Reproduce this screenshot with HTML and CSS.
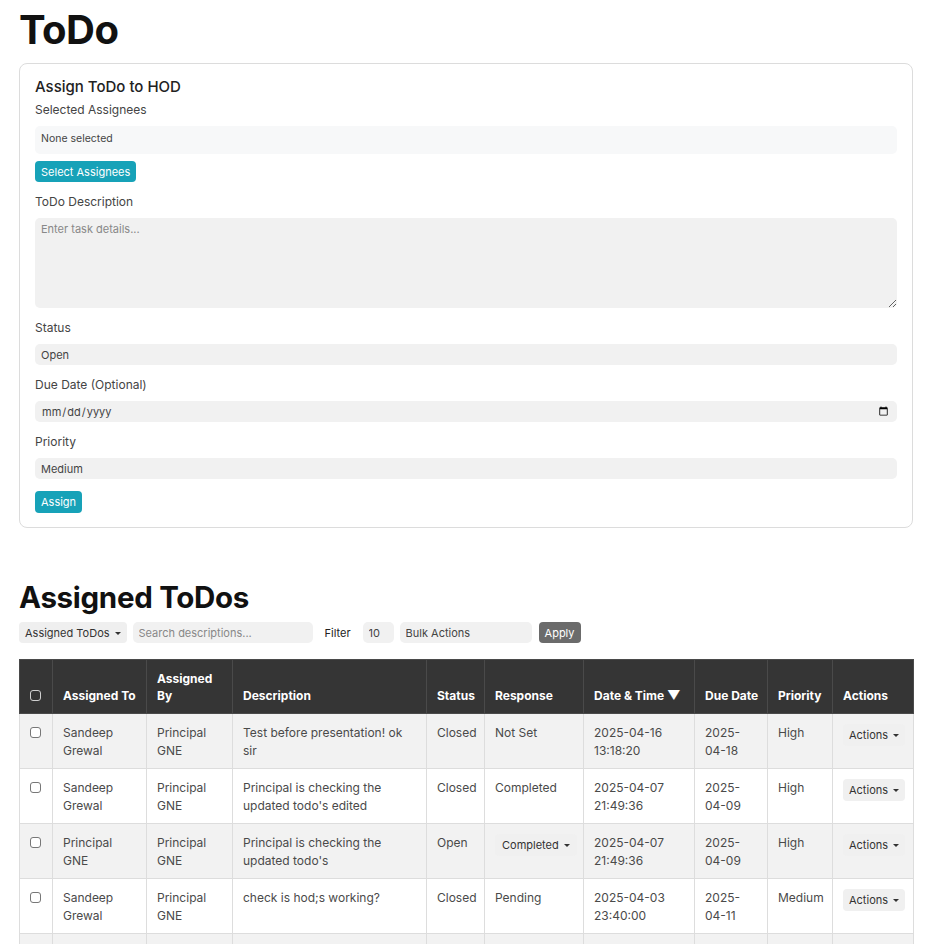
FILE: index.html
```html
<!DOCTYPE html>
<html lang="en">
<head>
<meta charset="utf-8">
<title>ToDo</title>
<link rel="stylesheet" href="styles.css">
</head>
<body>
<div class="page">
  <h1 class="page-title">ToDo</h1>

  <section class="card">
    <h3 class="card-title">Assign ToDo to HOD</h3>

    <label class="form-label">Selected Assignees</label>
    <div class="assignee-box">None selected</div>
    <button class="btn btn-info btn-select">Select Assignees</button>

    <label class="form-label">ToDo Description</label>
    <textarea class="form-control textarea" placeholder="Enter task details..."></textarea>

    <label class="form-label">Status</label>
    <select class="form-control select"><option>Open</option></select>

    <label class="form-label">Due Date (Optional)</label>
    <input class="form-control date" type="date">

    <label class="form-label">Priority</label>
    <select class="form-control select"><option>Medium</option></select>

    <button class="btn btn-info btn-assign">Assign</button>
  </section>

  <h2 class="section-title">Assigned ToDos</h2>

  <div class="toolbar">
    <button class="btn btn-light dropdown-toggle">Assigned ToDos</button>
    <input class="tool-input search" type="text" placeholder="Search descriptions...">
    <span class="filter-label">Filter</span>
    <select class="tool-input count"><option>10</option></select>
    <select class="tool-input bulk"><option>Bulk Actions</option></select>
    <button class="btn btn-secondary">Apply</button>
  </div>

  <table class="todo-table">
    <colgroup>
      <col style="width:33px"><col style="width:94px"><col style="width:86px"><col style="width:194px"><col style="width:58px"><col style="width:99px"><col style="width:111px"><col style="width:73px"><col style="width:65px"><col style="width:81px">
    </colgroup>
    <thead>
      <tr>
        <th><input type="checkbox" class="cb cb-head"></th>
        <th>Assigned To</th>
        <th class="wrap">Assigned By</th>
        <th>Description</th>
        <th>Status</th>
        <th>Response</th>
        <th>Date &amp; Time <span class="sort">▼</span></th>
        <th>Due Date</th>
        <th>Priority</th>
        <th>Actions</th>
      </tr>
    </thead>
    <tbody>
      <tr>
        <td><input type="checkbox" class="cb"></td>
        <td>Sandeep Grewal</td>
        <td>Principal GNE</td>
        <td>Test before presentation! ok sir</td>
        <td>Closed</td>
        <td>Not Set</td>
        <td>2025-04-16 13:18:20</td>
        <td>2025-04-18</td>
        <td>High</td>
        <td><button class="btn btn-row dropdown-toggle">Actions</button></td>
      </tr>
      <tr>
        <td><input type="checkbox" class="cb"></td>
        <td>Sandeep Grewal</td>
        <td>Principal GNE</td>
        <td>Principal is checking the updated todo's edited</td>
        <td>Closed</td>
        <td>Completed</td>
        <td>2025-04-07 21:49:36</td>
        <td>2025-04-09</td>
        <td>High</td>
        <td><button class="btn btn-row dropdown-toggle">Actions</button></td>
      </tr>
      <tr>
        <td><input type="checkbox" class="cb"></td>
        <td>Principal GNE</td>
        <td>Principal GNE</td>
        <td>Principal is checking the updated todo's</td>
        <td>Open</td>
        <td><button class="btn btn-row btn-response dropdown-toggle">Completed</button></td>
        <td>2025-04-07 21:49:36</td>
        <td>2025-04-09</td>
        <td>High</td>
        <td><button class="btn btn-row dropdown-toggle">Actions</button></td>
      </tr>
      <tr>
        <td><input type="checkbox" class="cb"></td>
        <td>Sandeep Grewal</td>
        <td>Principal GNE</td>
        <td>check is hod;s working?</td>
        <td>Closed</td>
        <td>Pending</td>
        <td>2025-04-03 23:40:00</td>
        <td>2025-04-11</td>
        <td>Medium</td>
        <td><button class="btn btn-row dropdown-toggle">Actions</button></td>
      </tr>
      <tr>
        <td><input type="checkbox" class="cb"></td>
        <td>Sandeep Grewal</td>
        <td>Principal GNE</td>
        <td>Review the timetable</td>
        <td>Open</td>
        <td>Pending</td>
        <td>2025-04-01 10:12:45</td>
        <td>2025-04-05</td>
        <td>Low</td>
        <td><button class="btn btn-row dropdown-toggle">Actions</button></td>
      </tr>
    </tbody>
  </table>
</div>
</body>
</html>
```

FILE: styles.css
```css
* { box-sizing: border-box; }

html, body {
  margin: 0;
  padding: 0;
  background: #fff;
}

body {
  font-family: Inter, "Noto Sans", "Liberation Sans", sans-serif;
  color: #333;
  font-size: 12px;
}

.page {
  width: 894px;
  margin-left: 19px;
  padding-top: 6px;
}

.page-title {
  font-size: 40px;
  font-weight: 700;
  line-height: 48px;
  margin: 0 0 9px 0;
  color: #111;
  letter-spacing: -0.5px;
}

.card {
  border: 1px solid #dcdcdc;
  border-radius: 8px;
  padding: 13px 15px 14px 15px;
  display: flex;
  flex-direction: column;
  align-items: flex-start;
}

.card-title {
  margin: 0 0 4px 0;
  font-size: 15px;
  font-weight: 500;
  line-height: 20px;
  color: #222;
}

.form-label {
  display: block;
  font-size: 12px;
  line-height: 18px;
  color: #444;
  margin-bottom: 7px;
}

.assignee-box {
  align-self: stretch;
  height: 28px;
  background: #f7f8f9;
  border-radius: 5px;
  font-size: 10.5px;
  line-height: 26px;
  padding: 0 6px;
  color: #444;
  margin-bottom: 7px;
}

.btn {
  font-family: inherit;
  border: none;
  border-radius: 4px;
  font-size: 11px;
  line-height: 14px;
  cursor: pointer;
  white-space: nowrap;
}

.btn-info {
  background: #17a2b8;
  color: #fff;
  padding: 4px 6px;
  height: 21px;
}

.btn-select { margin-bottom: 11px; }

.btn-assign {
  margin-top: 1px;
  height: 22px;
}

.form-control {
  align-self: stretch;
  width: 100%;
  border: none;
  background: #f1f1f1;
  border-radius: 5px;
  font-family: inherit;
  font-size: 11px;
  color: #444;
  margin: 0 0 11px 0;
  outline: none;
}

.textarea {
  height: 90px;
  padding: 5px 6px;
  line-height: 13px;
  resize: vertical;
  display: block;
}

.textarea::placeholder { color: #888; }

.select {
  appearance: none;
  -webkit-appearance: none;
  height: 21px;
  padding: 0 6px;
}

.date {
  height: 21px;
  padding: 0 6px;
}

.section-title {
  margin: 51px 0 0 0;
  font-size: 29.5px;
  font-weight: 700;
  line-height: 36px;
  color: #111;
  letter-spacing: -0.3px;
}

.toolbar {
  display: flex;
  align-items: center;
  gap: 6px;
  margin-top: 7px;
  margin-bottom: 16px;
  height: 21px;
}

.btn-light {
  background: #efefef;
  color: #333;
  padding: 0 6px;
  height: 21px;
}

.dropdown-toggle::after {
  content: "";
  display: inline-block;
  margin-left: 5px;
  vertical-align: 2px;
  border-top: 3.5px solid #333;
  border-left: 3px solid transparent;
  border-right: 3px solid transparent;
}

.tool-input {
  border: none;
  background: #f1f1f1;
  border-radius: 5px;
  font-family: inherit;
  font-size: 11px;
  color: #444;
  height: 21px;
  padding: 0 6px;
  outline: none;
  appearance: none;
  -webkit-appearance: none;
}

.tool-input::placeholder { color: #888; }

.search { width: 180px; }

.filter-label {
  font-size: 11px;
  color: #222;
  margin: 0 6px 0 6px;
}

.count { width: 31px; }
.bulk { width: 132px; }

.btn-secondary {
  background: #6b6b6b;
  color: #fff;
  height: 21px;
  padding: 0 6px;
  margin-left: 1px;
}

.todo-table {
  width: 894px;
  table-layout: fixed;
  border-collapse: collapse;
  font-size: 12px;
}

.todo-table th {
  background: #353535;
  color: #fff;
  font-weight: 700;
  text-align: left;
  vertical-align: bottom;
  padding: 10px 10px 9px 10px;
  line-height: 17px;
  border: 1px solid #4a4a4a;
  white-space: nowrap;
}

.todo-table th.wrap { white-space: normal; }

.todo-table td {
  vertical-align: top;
  padding: 10px 10px 8px 10px;
  line-height: 18px;
  color: #4a4a4a;
  border: 1px solid #dddddd;
}

.todo-table tbody tr:nth-child(odd) td { background: #f2f2f2; }
.todo-table tbody tr:nth-child(even) td { background: #fff; }

.cb {
  appearance: none;
  -webkit-appearance: none;
  display: block;
  margin: 3px 0 0 0;
  width: 11px;
  height: 11px;
  border: 1px solid #777;
  border-radius: 3px;
  background: #fff;
}

.cb-head {
  margin: 0 0 3px 0;
  border-color: #cfcfcf;
  background: transparent;
}

.sort { font-size: 13px; line-height: 14px; }

.btn-row {
  background: #f0f0f0;
  color: #333;
  height: 22px;
  padding: 0 6px;
}

.btn-response { padding: 0 7px; }
```
